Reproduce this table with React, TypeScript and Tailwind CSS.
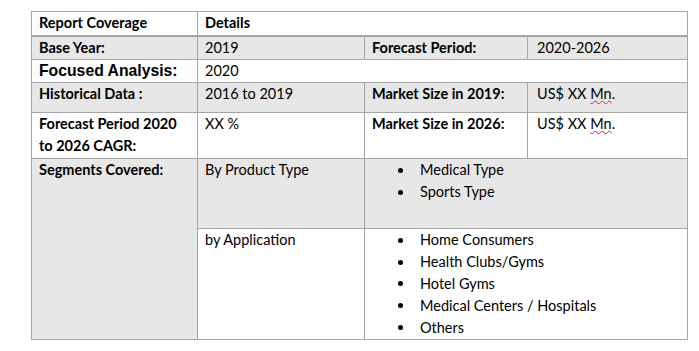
import React from "react"

const font = { fontFamily: "Lato, 'Liberation Sans', sans-serif" }

const cell = "border border-[#a6a6a6] align-top pl-[7px] pr-1 pt-0 leading-[22px]"
const gray = "bg-[#e7e7e7]"

const Bullets = ({ items }: { items: string[] }) => (
	<ul className="pl-[26px]">
		{items.map((t) => (
			<li key={t} className="flex items-center h-[21.8px]">
				<span className="w-[5px] h-[5px] rounded-full bg-black" />
				<span className="ml-[17px]">{t}</span>
			</li>
		))}
	</ul>
)

const Mn = () => (
	<>
		US$ XX{" "}
		<span className="underline decoration-wavy decoration-[#e02020] decoration-1 underline-offset-[1px]">
			Mn
		</span>
		.
	</>
)

export default function App() {
	return (
		<div className="w-[699px] h-[351px] bg-white pt-[11px] pl-[31px]" style={font}>
			<table className="border-collapse table-fixed w-[656px] text-[14.5px] text-black">
				<colgroup>
					<col className="w-[166px]" />
					<col className="w-[167px]" />
					<col className="w-[163px]" />
					<col className="w-[160px]" />
				</colgroup>
				<tbody>
					<tr className="h-[24px]">
						<td className={`${cell} font-bold border-b-2`}>Report Coverage</td>
						<td className={`${cell} font-bold border-b-2`} colSpan={3}>
							Details
						</td>
					</tr>
					<tr className={`h-[22px] ${gray}`}>
						<td className={`${cell} font-bold`}>Base Year:</td>
						<td className={cell}>2019</td>
						<td className={`${cell} font-bold`}>Forecast Period:</td>
						<td className={`${cell} pl-[9px]`}>2020-2026</td>
					</tr>
					<tr className="h-[22px]">
						<td
							className={`${cell} font-bold text-[15.75px] leading-[20px]`}
							style={{ fontFamily: "'Liberation Sans', Arial, sans-serif" }}
						>
							Focused Analysis:
						</td>
						<td className={cell} colSpan={3}>
							2020
						</td>
					</tr>
					<tr className={`h-[30px] ${gray}`}>
						<td className={`${cell} font-bold`}>Historical Data :</td>
						<td className={cell}>2016 to 2019</td>
						<td className={`${cell} font-bold`}>Market Size in 2019:</td>
						<td className={`${cell} pl-[9px]`}>
							<Mn />
						</td>
					</tr>
					<tr className="h-[46px]">
						<td className={`${cell} font-bold`}>
							Forecast Period 2020
							<br />
							to 2026 CAGR:
						</td>
						<td className={cell}>XX %</td>
						<td className={`${cell} font-bold`}>Market Size in 2026:</td>
						<td className={`${cell} pl-[9px]`}>
							<Mn />
						</td>
					</tr>
					<tr className="h-[70px]">
						<td className={`${cell} ${gray} font-bold`} rowSpan={2}>
							Segments Covered:
						</td>
						<td className={`${cell} ${gray}`}>By Product Type</td>
						<td className={`${cell} ${gray} pt-px`} colSpan={2}>
							<Bullets items={["Medical Type", "Sports Type"]} />
						</td>
					</tr>
					<tr className="h-[111px]">
						<td className={cell}>by Application</td>
						<td className={`${cell} pt-px`} colSpan={2}>
							<Bullets
								items={[
									"Home Consumers",
									"Health Clubs/Gyms",
									"Hotel Gyms",
									"Medical Centers / Hospitals",
									"Others",
								]}
							/>
						</td>
					</tr>
				</tbody>
			</table>
		</div>
	)
}
